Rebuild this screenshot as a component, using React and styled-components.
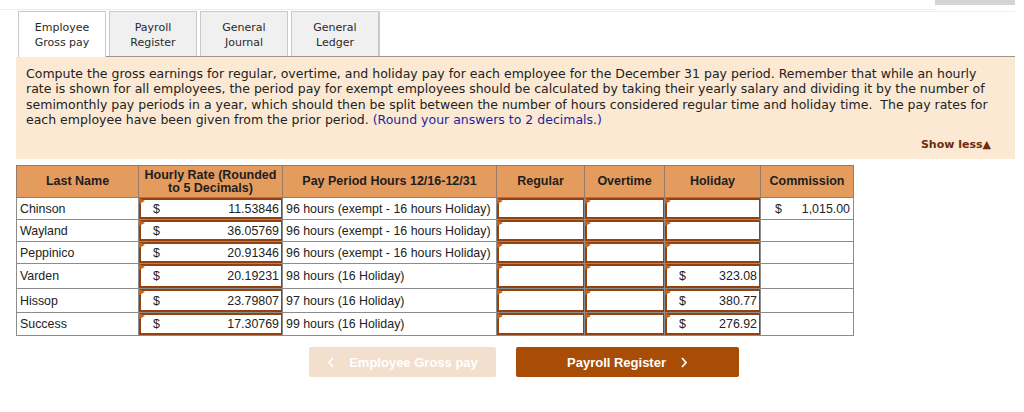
import React from 'react';
import styled, { createGlobalStyle } from 'styled-components';

const GlobalStyle = createGlobalStyle`
  body {
    margin: 0;
    background: #fff;
  }
`;

const rows = [
  { name: 'Chinson', rate: '11.53846', hours: '96 hours (exempt - 16 hours Holiday)', commission: '1,015.00', h: 22 },
  { name: 'Wayland', rate: '36.05769', hours: '96 hours (exempt - 16 hours Holiday)', h: 22 },
  { name: 'Peppinico', rate: '20.91346', hours: '96 hours (exempt - 16 hours Holiday)', h: 22 },
  { name: 'Varden', rate: '20.19231', hours: '98 hours (16 Holiday)', holiday: '323.08', h: 25 },
  { name: 'Hissop', rate: '23.79807', hours: '97 hours (16 Holiday)', holiday: '380.77', h: 24 },
  { name: 'Success', rate: '17.30769', hours: '99 hours (16 Holiday)', holiday: '276.92', h: 23 },
];

const tabs = [
  ['Employee', 'Gross pay'],
  ['Payroll', 'Register'],
  ['General', 'Journal'],
  ['General', 'Ledger'],
];

const Chevron = ({ left }) => (
  <svg width="8" height="11" viewBox="0 0 8 11">
    <polyline
      points={left ? '6,1 2,5.5 6,10' : '2,1 6,5.5 2,10'}
      fill="none"
      stroke="#fff"
      strokeWidth="1.8"
    />
  </svg>
);

const App = () => {
  return (
    <Page>
      <GlobalStyle />
      <TopStrip>
        <TopLine />
        <ScrollThumb />
      </TopStrip>

      <TabRow>
        {tabs.map((t, i) => (
          <Tab key={i} active={i === 0}>
            {t[0]}
            <br />
            {t[1]}
          </Tab>
        ))}
        <TabFiller />
      </TabRow>

      <Instructions>
        <p>
          Compute the gross earnings for regular, overtime, and holiday pay for each employee for the
          December 31 pay period. Remember that while an hourly rate is shown for all employees, the
          period pay for exempt employees should be calculated by taking their yearly salary and
          dividing it by the number of semimonthly pay periods in a year, which should then be split
          between the number of hours considered regular time and holiday time.&nbsp; The pay rates
          for each employee have been given from the prior period.{' '}
          <Note>(Round your answers to 2 decimals.)</Note>
        </p>
        <ShowLess>Show less▲</ShowLess>
      </Instructions>

      <Grid>
        <colgroup>
          <col style={{ width: 122 }} />
          <col style={{ width: 144 }} />
          <col style={{ width: 214 }} />
          <col style={{ width: 88 }} />
          <col style={{ width: 80 }} />
          <col style={{ width: 96 }} />
          <col style={{ width: 93 }} />
        </colgroup>
        <thead>
          <tr>
            <Th>Last Name</Th>
            <Th>
              Hourly Rate (Rounded
              <br />
              to 5 Decimals)
            </Th>
            <Th>Pay Period Hours 12/16-12/31</Th>
            <Th>Regular</Th>
            <Th>Overtime</Th>
            <Th>Holiday</Th>
            <Th>Commission</Th>
          </tr>
        </thead>
        <tbody>
          {rows.map((r) => (
            <tr key={r.name}>
              <Td h={r.h}>{r.name}</Td>
              <InputTd>
                <Field h={r.h}>
                  <span>$</span>
                  <span>{r.rate}</span>
                </Field>
              </InputTd>
              <Td h={r.h}>{r.hours}</Td>
              <InputTd>
                <Field h={r.h} />
              </InputTd>
              <InputTd>
                <Field h={r.h} />
              </InputTd>
              <InputTd>
                <Field h={r.h}>
                  {r.holiday && (
                    <>
                      <span>$</span>
                      <span>{r.holiday}</span>
                    </>
                  )}
                </Field>
              </InputTd>
              <Td h={r.h}>
                {r.commission && (
                  <Money>
                    <span>$</span>
                    <span>{r.commission}</span>
                  </Money>
                )}
              </Td>
            </tr>
          ))}
        </tbody>
      </Grid>

      <Actions>
        <NavButton disabled>
          <Chevron left />
          Employee Gross pay
        </NavButton>
        <NavButton primary>
          Payroll Register
          <Chevron />
        </NavButton>
      </Actions>
    </Page>
  );
};

export default App;

const Page = styled.div`
  width: 1024px;
  height: 412px;
  box-sizing: border-box;
  padding: 0 9px 0 16px;
  overflow: hidden;
`;

const TopStrip = styled.div`
  display: flex;
  align-items: flex-start;
  height: 10px;
  margin: 0 -9px 0 -16px;
`;

const TopLine = styled.div`
  flex: 1;
  height: 9px;
  border-bottom: 1px solid #ececec;
`;

const ScrollThumb = styled.div`
  width: 80px;
  height: 5px;
  margin-right: 9px;
  background: #d5d5d5;
`;

const TabRow = styled.div`
  display: flex;
  gap: 3px;
  margin: 1px 0 0 2px;
  border-bottom: 1px solid #9d958e;
  font-family: 'DejaVu Sans', Verdana, sans-serif;
  font-size: 11px;
  line-height: 15px;
  color: #2a2a2a;
`;

const Tab = styled.div`
  width: 88px;
  box-sizing: border-box;
  padding-top: 8px;
  text-align: center;
  border: 1px solid #c9c9c9;
  border-bottom: none;
  background: ${(p) => (p.active ? '#fff' : '#f0f0f0')};
  margin-bottom: ${(p) => (p.active ? '-1px' : '0')};
  height: ${(p) => (p.active ? '46px' : '45px')};
`;

const TabFiller = styled.div`
  flex: 1;
  margin-left: -3px;
  border-left: 1px solid #c9c9c9;
  border-top: 1px solid #f0f0f0;
`;

const Instructions = styled.div`
  background: #fbe9d4;
  padding: 9px 18px 7px 10px;
  font-family: 'DejaVu Sans', Verdana, sans-serif;
  font-size: 12.5px;
  line-height: 15.3px;
  color: #222;

  p {
    margin: 0;
  }
`;

const Note = styled.span`
  color: #1f1fa0;
`;

const ShowLess = styled.div`
  margin-top: 10px;
  text-align: right;
  font-size: 11px;
  font-weight: bold;
  color: #6e2c0c;
  padding-right: 6px;
`;

const Grid = styled.table`
  margin-top: 6px;
  width: 837px;
  table-layout: fixed;
  border-collapse: collapse;
  font-family: 'Liberation Sans', Arial, sans-serif;
  font-size: 12.4px;
  color: #222;
`;

const Th = styled.th`
  height: 31px;
  padding: 0 2px;
  background: #e49b5e;
  border: 1px solid #9a7a62;
  font-weight: bold;
  font-size: 12.5px;
  line-height: 13px;
  color: #1e1e1e;
  text-align: center;
`;

const Td = styled.td`
  height: ${(p) => p.h - 1}px;
  padding: 0 3px;
  border: 1px solid #8c8c8c;
  white-space: nowrap;
  box-sizing: border-box;
`;

const InputTd = styled.td`
  padding: 0;
  border: 1px solid #8c8c8c;
`;

const Field = styled.div`
  position: relative;
  box-sizing: border-box;
  height: ${(p) => p.h - 1}px;
  display: flex;
  align-items: center;
  justify-content: space-between;
  padding: 0 2px 0 12px;
  border: 2px solid #93420f;
  border-right-width: 1px;
  background: #fff;

  &::before {
    content: '';
    position: absolute;
    top: -2px;
    left: -2px;
    border-top: 3px solid transparent;
    border-bottom: 3px solid transparent;
    border-left: 6px solid #c5651d;
  }
`;

const Money = styled.div`
  display: flex;
  justify-content: space-between;
  padding-left: 11px;
`;

const Actions = styled.div`
  display: flex;
  justify-content: center;
  gap: 20px;
  margin-top: 11px;
  padding-left: 17px;
`;

const NavButton = styled.button`
  display: flex;
  align-items: center;
  justify-content: center;
  gap: 14px;
  height: 30px;
  width: ${(p) => (p.primary ? '223px' : '187px')};
  padding: 0;
  border: none;
  border-radius: 2px;
  background: ${(p) => (p.primary ? '#a84c06' : '#f2dfcd')};
  color: #fff;
  font-family: 'Liberation Sans', Arial, sans-serif;
  font-size: 13px;
  font-weight: bold;
  cursor: ${(p) => (p.disabled ? 'default' : 'pointer')};
`;
